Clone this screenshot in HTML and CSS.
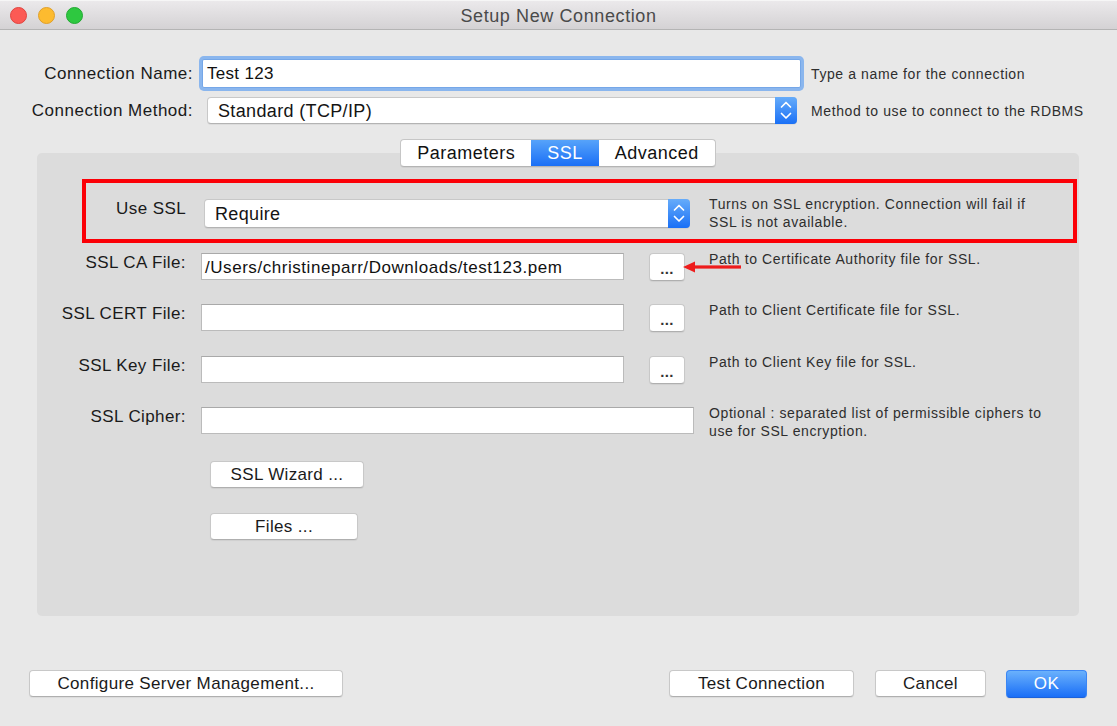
FILE: index.html
```html
<!DOCTYPE html>
<html>
<head>
<meta charset="utf-8">
<title>Setup New Connection</title>
<link rel="stylesheet" href="styles.css">
</head>
<body>
<div class="window">
  <div class="titlebar">
    <div class="lights">
      <span class="light red"></span>
      <span class="light yellow"></span>
      <span class="light green"></span>
    </div>
    <div class="title">Setup New Connection</div>
    <div></div>
  </div>

  <div class="top-grid">
    <div class="top-label">Connection Name:</div>
    <div class="name-input">Test 123</div>
    <div class="help top-help">Type a name for the connection</div>

    <div class="top-label">Connection Method:</div>
    <div class="select method">
      <span class="select-text">Standard (TCP/IP)</span>
      <span class="stepper">
        <svg width="22" height="27" viewBox="0 0 22 27"><polyline points="6.5,10 11,5.5 15.5,10" fill="none" stroke="#fff" stroke-width="1.7" stroke-linecap="round" stroke-linejoin="round"/><polyline points="6.5,16.5 11,21 15.5,16.5" fill="none" stroke="#fff" stroke-width="1.7" stroke-linecap="round" stroke-linejoin="round"/></svg>
      </span>
    </div>
    <div class="help top-help">Method to use to connect to the RDBMS</div>
  </div>

  <div class="panel">
    <div class="tabs">
      <div class="seg">
        <span class="tab">Parameters</span>
        <span class="tab active">SSL</span>
        <span class="tab">Advanced</span>
      </div>
    </div>

    <div class="rows">
      <div class="row first">
        <div class="label">Use SSL</div>
        <div class="select require">
          <span class="select-text">Require</span>
          <span class="stepper">
            <svg width="22" height="29" viewBox="0 0 22 29"><polyline points="6.5,11 11,6.5 15.5,11" fill="none" stroke="#fff" stroke-width="1.7" stroke-linecap="round" stroke-linejoin="round"/><polyline points="6.5,17.5 11,22 15.5,17.5" fill="none" stroke="#fff" stroke-width="1.7" stroke-linecap="round" stroke-linejoin="round"/></svg>
          </span>
        </div>
        <div class="help">Turns on SSL encryption. Connection will fail if<br>SSL is not available.</div>
      </div>

      <div class="row">
        <div class="label">SSL CA File:</div>
        <div class="field">
          <div class="input short">/Users/christineparr/Downloads/test123.pem</div>
          <div class="btn dots">...</div>
        </div>
        <div class="help">Path to Certificate Authority file for SSL.</div>
        <svg class="arrow" width="58" height="12" viewBox="0 0 58 12"><polygon points="0,6 12,0.5 12,11.5" fill="#ee1c1c"/><rect x="11" y="4.4" width="47" height="3.2" fill="#ee1c1c"/></svg>
      </div>

      <div class="row">
        <div class="label">SSL CERT File:</div>
        <div class="field">
          <div class="input short"></div>
          <div class="btn dots">...</div>
        </div>
        <div class="help">Path to Client Certificate file for SSL.</div>
      </div>

      <div class="row">
        <div class="label">SSL Key File:</div>
        <div class="field">
          <div class="input short"></div>
          <div class="btn dots">...</div>
        </div>
        <div class="help">Path to Client Key file for SSL.</div>
      </div>

      <div class="row">
        <div class="label">SSL Cipher:</div>
        <div class="field">
          <div class="input long"></div>
        </div>
        <div class="help">Optional : separated list of permissible ciphers to<br>use for SSL encryption.</div>
      </div>

      <div class="row btn-row wizard-row">
        <div></div>
        <div class="field"><div class="btn wizard">SSL Wizard ...</div></div>
        <div></div>
      </div>

      <div class="row btn-row">
        <div></div>
        <div class="field"><div class="btn files">Files ...</div></div>
        <div></div>
      </div>
    </div>
  </div>

  <div class="footer">
    <div class="btn configure">Configure Server Management...</div>
    <div class="spacer"></div>
    <div class="btn test">Test Connection</div>
    <div class="btn cancel">Cancel</div>
    <div class="btn ok">OK</div>
  </div>
</div>
</body>
</html>
```

FILE: styles.css
```css
* { box-sizing: border-box; }

html, body {
  margin: 0;
  padding: 0;
}

body {
  width: 1117px;
  height: 726px;
  overflow: hidden;
  font-family: "Liberation Sans", Arial, sans-serif;
  background: #e8e8e8;
  color: #1c1c1c;
}

.window {
  width: 1117px;
  height: 726px;
  background: #e8e8e8;
  display: flex;
  flex-direction: column;
}

/* Title bar */
.titlebar {
  height: 30px;
  flex: none;
  display: grid;
  grid-template-columns: 1fr auto 1fr;
  align-items: center;
  background: linear-gradient(#ebe9eb, #d4d2d4);
  border-top: 1px solid #f6f6f6;
  border-bottom: 1px solid #b4b4b4;
}

.lights {
  display: flex;
  gap: 11px;
  padding-left: 10px;
}

.light {
  width: 17px;
  height: 17px;
  border-radius: 50%;
}

.red { background: #fc5a55; border: 1px solid #e0443f; }
.yellow { background: #fdbb2f; border: 1px solid #e0a02a; }
.green { background: #2ec840; border: 1px solid #22a932; }

.title {
  font-size: 18px;
  letter-spacing: 0.6px;
  color: #4a4a4a;
  padding-top: 2px;
}

/* Top form */
.top-grid {
  margin-top: 29px;
  display: grid;
  grid-template-columns: 193px 599px 1fr;
  grid-template-rows: 29px 27px;
  column-gap: 9px;
  row-gap: 9px;
}

.top-label {
  text-align: right;
  font-size: 17px;
  letter-spacing: 0.5px;
  align-self: center;
  color: #1a1a1a;
  padding-top: 1px;
}

.name-input {
  height: 29px;
  background: #fff;
  border: 1px solid #75a7e8;
  border-radius: 2px;
  box-shadow: 0 0 0 3px #8ab6ee;
  font-size: 17px;
  letter-spacing: 0.3px;
  padding-left: 4px;
  line-height: 28px;
  color: #111;
}

.help {
  font-size: 14px;
  letter-spacing: 0.6px;
  line-height: 18px;
  color: #2e2e2e;
  white-space: nowrap;
}

.top-help {
  align-self: center;
  padding-left: 1px;
  padding-top: 1px;
}

.select {
  display: flex;
  align-items: center;
  background: #fff;
  border: 1px solid #c8c8c8;
  border-bottom-color: #b3b3b3;
  border-radius: 4px;
  box-shadow: 0 1px 0 rgba(0, 0, 0, 0.05);
  padding-left: 10px;
}

.select-text {
  font-size: 18px;
  letter-spacing: 0.35px;
  color: #141414;
  padding-top: 1px;
}

.select.method {
  height: 27px;
  margin: 0 4px 0 5px;
}

.stepper {
  margin: -1px -1px -1px auto;
  align-self: stretch;
  width: 22px;
  border-radius: 0 4px 4px 0;
  background: linear-gradient(#66acfa, #1a70f6);
  display: flex;
  align-items: center;
  justify-content: center;
}

.stepper svg { display: block; }

/* Panel */
.panel {
  margin: 29px 38px 0 37px;
  background: #dcdcdc;
  border-radius: 5px;
  padding-bottom: 76px;
}

.tabs {
  display: flex;
  justify-content: center;
  margin-top: -14px;
}

.seg {
  display: flex;
  height: 28px;
  background: #fff;
  border: 1px solid #c6c6c6;
  border-bottom-color: #b4b4b4;
  border-radius: 4px;
  overflow: hidden;
  box-shadow: 0 1px 0 rgba(0, 0, 0, 0.05);
}

.tab {
  padding: 0 16px;
  font-size: 18px;
  letter-spacing: 0.5px;
  line-height: 27px;
  color: #111;
}

.tab.active {
  background: linear-gradient(#56a3fa, #1a6ff6);
  color: #fff;
}

.rows {
  display: flex;
  flex-direction: column;
  gap: 24.5px;
  padding-top: 32px;
}

.row {
  position: relative;
  height: 27px;
  display: grid;
  grid-template-columns: 149px 493px 1fr;
  column-gap: 15px;
  align-items: start;
}

.row.first {
  height: 29px;
}

.row.first::before {
  content: "";
  position: absolute;
  left: 45px;
  right: 2px;
  top: -20px;
  bottom: -15px;
  border: 4px solid #fb0007;
  pointer-events: none;
}

.select.require {
  height: 29px;
  margin: 0 4px 0 3px;
}

.label {
  text-align: right;
  font-size: 17px;
  letter-spacing: 0.4px;
  line-height: 18px;
  color: #1a1a1a;
  padding-top: 1px;
}

.row .help {
  margin-top: -3px;
}

.row.first .help {
  margin-top: -4px;
}

.field {
  display: flex;
}

.input {
  height: 27px;
  background: #fff;
  border: 1px solid #bbbbbb;
  border-top-color: #a9a9a9;
  font-size: 17px;
  letter-spacing: 0.55px;
  padding-left: 3px;
  line-height: 27px;
  color: #111;
  white-space: nowrap;
  overflow: hidden;
}

.input.short { width: 423px; }
.input.long { width: 494px; }

.btn {
  height: 27px;
  background: #fff;
  border: 1px solid #c8c8c8;
  border-bottom-color: #afafaf;
  border-radius: 4px;
  box-shadow: 0 1px 1px rgba(0, 0, 0, 0.06);
  font-size: 17px;
  letter-spacing: 0.35px;
  line-height: 26px;
  text-align: center;
  color: #1a1a1a;
  white-space: nowrap;
}

.dots {
  width: 36px;
  height: 28px;
  margin-left: 25px;
  font-size: 15px;
  font-weight: bold;
  line-height: 30px;
  letter-spacing: 0.3px;
  color: #333;
}

.arrow {
  position: absolute;
  left: 646px;
  top: 8px;
}

.wizard-row {
  margin-top: 2.5px;
}

.btn-row .field {
  padding-left: 9px;
}

.wizard { width: 154px; }
.files { width: 148px; }

/* Footer */
.footer {
  margin-top: 54px;
  display: flex;
  padding: 0 30px 0 29px;
}

.spacer { flex: 1; }

.configure { width: 314px; }
.test { width: 185px; }
.cancel { width: 111px; margin-left: 21px; }

.ok {
  width: 81px;
  height: 28px;
  margin-left: 20px;
  background: linear-gradient(#6ab1fc, #196ef7);
  border-color: #3b86f4;
  border-bottom-color: #1c61d9;
  color: #fff;
}
```
